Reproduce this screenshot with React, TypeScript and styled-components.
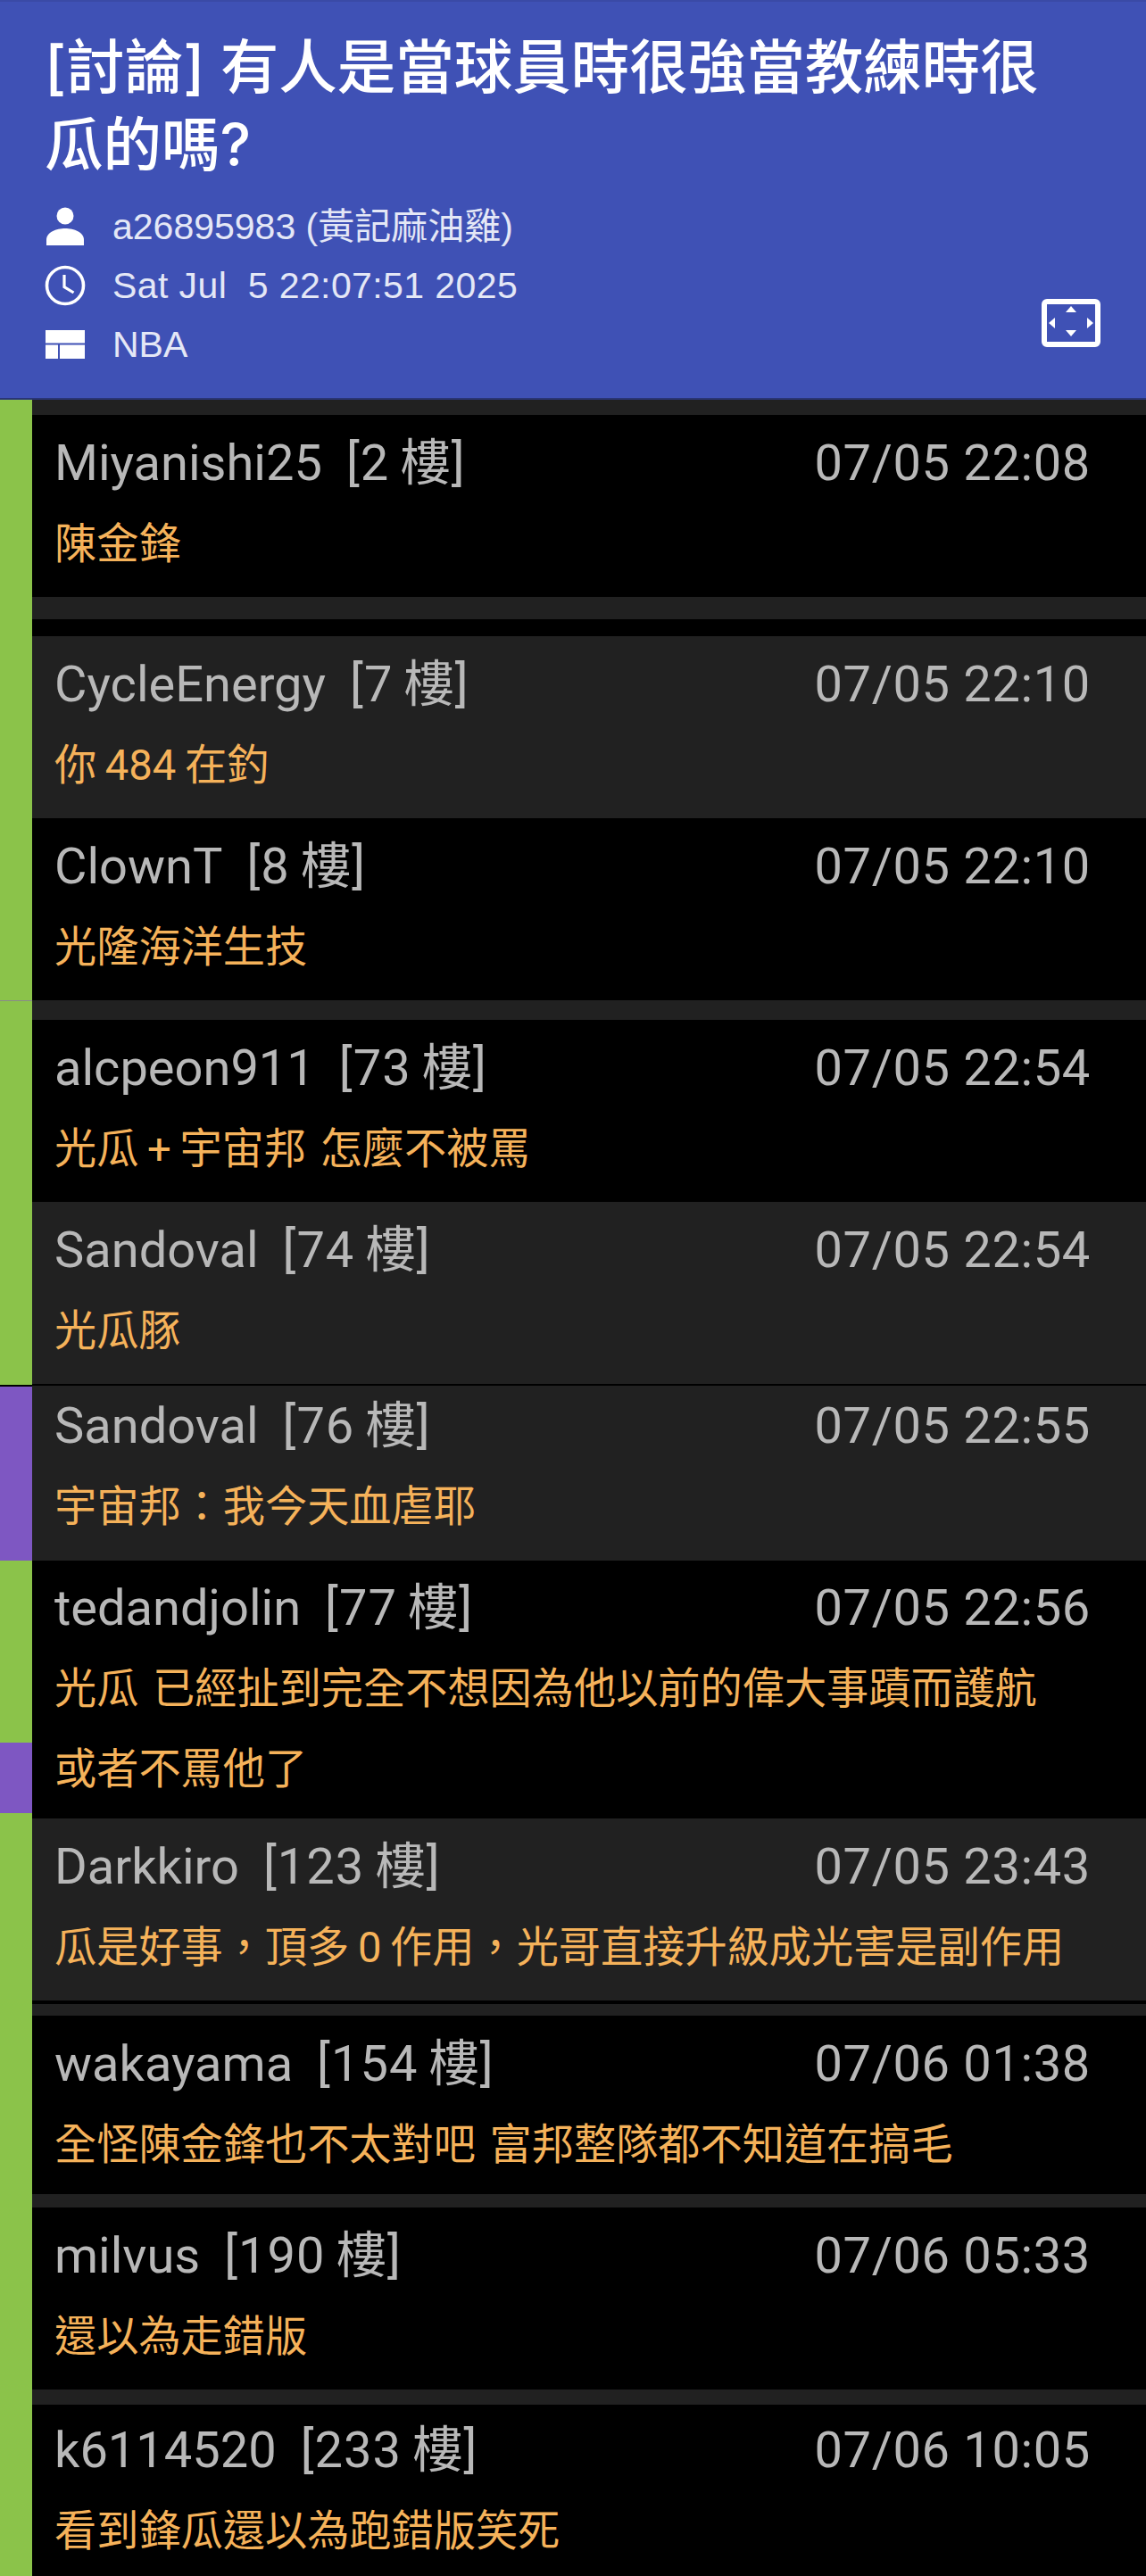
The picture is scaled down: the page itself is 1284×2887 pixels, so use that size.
import styled, { createGlobalStyle } from 'styled-components';

const GREEN = '#8bc34a';
const PURPLE = '#7e57c2';
const GRAY = '#212121';
const BLACK = '#000000';

type Post = {
  id: string;
  author: string;
  floor: string;
  time: string;
  lines: string[];
  tone: string;
  before?: { color: string; height: number }[];
  pt?: number;
  pb?: number;
};

const posts: Post[] = [
  {
    id: '2',
    author: 'Miyanishi25',
    floor: '[2\u2009樓]',
    time: '07/05 22:08',
    lines: ['陳金鋒'],
    tone: BLACK,
    before: [{ color: GRAY, height: 17 }],
  },
  {
    id: '7',
    author: 'CycleEnergy',
    floor: '[7\u2009樓]',
    time: '07/05 22:10',
    lines: ['你\u2009484\u2009在釣'],
    tone: GRAY,
    before: [
      { color: GRAY, height: 25 },
      { color: BLACK, height: 19 },
    ],
  },
  { id: '8', author: 'ClownT', floor: '[8\u2009樓]', time: '07/05 22:10', lines: ['光隆海洋生技'], tone: BLACK },
  {
    id: '73',
    author: 'alcpeon911',
    floor: '[73\u2009樓]',
    time: '07/05 22:54',
    lines: ['光瓜\u2009+\u2009宇宙邦 怎麼不被罵'],
    tone: BLACK,
    before: [{ color: GRAY, height: 22 }],
  },
  { id: '74', author: 'Sandoval', floor: '[74\u2009樓]', time: '07/05 22:54', lines: ['光瓜豚'], tone: GRAY },
  {
    id: '76',
    author: 'Sandoval',
    floor: '[76\u2009樓]',
    time: '07/05 22:55',
    lines: ['宇宙邦：我今天血虐耶'],
    tone: GRAY,
    before: [{ color: BLACK, height: 2 }],
    pt: 13,
    pb: 15,
  },
  {
    id: '77',
    author: 'tedandjolin',
    floor: '[77\u2009樓]',
    time: '07/05 22:56',
    lines: ['光瓜 已經扯到完全不想因為他以前的偉大事蹟而護航', '或者不罵他了'],
    tone: BLACK,
    pt: 21,
    pb: 10,
  },
  {
    id: '123',
    author: 'Darkkiro',
    floor: '[123\u2009樓]',
    time: '07/05 23:43',
    lines: ['瓜是好事，頂多\u20090\u2009作用，光哥直接升級成光害是副作用'],
    tone: GRAY,
  },
  {
    id: '154',
    author: 'wakayama',
    floor: '[154\u2009樓]',
    time: '07/06 01:38',
    lines: ['全怪陳金鋒也不太對吧 富邦整隊都不知道在搞毛'],
    tone: BLACK,
    before: [
      { color: BLACK, height: 4 },
      { color: GRAY, height: 13 },
    ],
    pb: 10,
  },
  {
    id: '190',
    author: 'milvus',
    floor: '[190\u2009樓]',
    time: '07/06 05:33',
    lines: ['還以為走錯版'],
    tone: BLACK,
    before: [{ color: GRAY, height: 15 }],
  },
  {
    id: '233',
    author: 'k6114520',
    floor: '[233\u2009樓]',
    time: '07/06 10:05',
    lines: ['看到鋒瓜還以為跑錯版笑死'],
    tone: BLACK,
    before: [{ color: GRAY, height: 17 }],
    pt: 19,
    pb: 0,
  },
];

const railSegments = [
  { color: GREEN, height: 673 },
  { color: '#8a8a8a', height: 1 },
  { color: GREEN, height: 430 },
  { color: BLACK, height: 2 },
  { color: PURPLE, height: 195 },
  { color: GREEN, height: 204 },
  { color: PURPLE, height: 79 },
  { color: GREEN, height: 855 },
];

const PersonIcon = () => (
  <svg width="44" height="44" viewBox="0 0 44 44" fill="#fff">
    <circle cx="22" cy="10" r="9.5" />
    <path d="M1 43v-6c0-9 11-13 21-13s21 4 21 13v6z" />
  </svg>
);

const ClockIcon = () => (
  <svg width="46" height="46" viewBox="0 0 46 46" fill="none" stroke="#fff">
    <circle cx="23" cy="23" r="20.5" strokeWidth="3.6" />
    <path d="M22 11v13.5l10.5 6.5" strokeWidth="3.2" />
  </svg>
);

const QuiltIcon = () => (
  <svg width="44" height="32" viewBox="0 0 44 32" fill="#fff">
    <path d="M0 0h44v14.5H0zM0 16.5h14V32H0zM16 16.5h28V32H16z" />
  </svg>
);

const FullscreenIcon = () => (
  <svg width="66" height="54" viewBox="0 0 66 54">
    <rect x="3" y="3" width="60" height="48" rx="3" fill="none" stroke="#fff" strokeWidth="6" />
    <path d="M33 8l6 7H27zM33 42l-6-7h12zM8 27l7-6v12zM58 27l-7 6V21z" fill="#fff" />
  </svg>
);

const App = () => {
  return (
    <Page>
      <GlobalStyle />
      <Header>
        <Title>[討論] 有人是當球員時很強當教練時很瓜的嗎?</Title>
        <MetaRow>
          <MetaList>
            <MetaItem>
              <MetaIcon>
                <PersonIcon />
              </MetaIcon>
              a26895983 (黃記麻油雞)
            </MetaItem>
            <MetaItem $spaced>
              <MetaIcon>
                <ClockIcon />
              </MetaIcon>
              Sat Jul  5 22:07:51 2025
            </MetaItem>
            <MetaItem>
              <MetaIcon>
                <QuiltIcon />
              </MetaIcon>
              NBA
            </MetaItem>
          </MetaList>
          <FullscreenButton>
            <FullscreenIcon />
          </FullscreenButton>
        </MetaRow>
      </Header>
      <Main>
        <Rail>
          {railSegments.map((segment, index) => (
            <RailSegment key={index} $color={segment.color} $height={segment.height} />
          ))}
        </Rail>
        <Thread>
          {posts.map((post) => (
            <li key={post.id}>
              {post.before?.map((strip, index) => (
                <Strip key={index} $color={strip.color} $height={strip.height} />
              ))}
              <Row $tone={post.tone} $pt={post.pt ?? 22} $pb={post.pb ?? 14}>
                <RowHead>
                  <Author>
                    {post.author}
                    <Floor>{post.floor}</Floor>
                  </Author>
                  <Time>{post.time}</Time>
                </RowHead>
                <Content>
                  {post.lines.map((line) => (
                    <ContentLine key={line}>{line}</ContentLine>
                  ))}
                </Content>
              </Row>
            </li>
          ))}
        </Thread>
      </Main>
    </Page>
  );
};

export default App;

const GlobalStyle = createGlobalStyle`
  html, body {
    margin: 0;
    padding: 0;
    background: #000;
  }

  ul {
    margin: 0;
    padding: 0;
    list-style: none;
  }
`;

const Page = styled.div`
  width: 1284px;
  height: 2887px;
  overflow: hidden;
  font-family: Roboto, 'Noto Sans CJK TC', sans-serif;
`;

const Header = styled.header`
  box-sizing: border-box;
  height: 448px;
  padding: 30px 51px 0 50px;
  background: #3f51b5;
  border-top: 2px solid #3a4aa6;
  border-bottom: 2px solid #2a3575;
  color: #fff;
`;

const Title = styled.h1`
  max-width: 1130px;
  margin: 0;
  font-family: Inter, 'Noto Sans CJK TC', sans-serif;
  font-size: 65.5px;
  font-weight: 500;
  line-height: 87px;
`;

const MetaRow = styled.div`
  display: flex;
  justify-content: space-between;
  margin-top: 15px;
`;

const MetaList = styled.div`
  display: flex;
  flex-direction: column;
`;

const MetaItem = styled.div<{ $spaced?: boolean }>`
  display: flex;
  align-items: center;
  height: 66px;
  line-height: 66px;
  font-family: 'Liberation Sans', 'Noto Sans CJK TC', sans-serif;
  font-size: 41px;
  letter-spacing: ${(props) => (props.$spaced ? '0.4px' : '0')};
  color: #e4e7f6;
  white-space: pre;
`;

const MetaIcon = styled.span`
  display: flex;
  justify-content: center;
  width: 46px;
  margin-right: 30px;
`;

const FullscreenButton = styled.div`
  display: flex;
  margin-top: 114px;
`;

const Main = styled.main`
  display: flex;
`;

const Rail = styled.div`
  display: flex;
  flex-direction: column;
  flex: 0 0 36px;
`;

const RailSegment = styled.div<{ $color: string; $height: number }>`
  height: ${(props) => props.$height}px;
  background: ${(props) => props.$color};
`;

const Thread = styled.ul`
  flex: 1;
  min-width: 0;
`;

const Strip = styled.div<{ $color: string; $height: number }>`
  height: ${(props) => props.$height}px;
  background: ${(props) => props.$color};
`;

const Row = styled.article<{ $tone: string; $pt: number; $pb: number }>`
  padding: ${(props) => props.$pt}px 62px ${(props) => props.$pb}px 25px;
  background: ${(props) => props.$tone};
`;

const RowHead = styled.div`
  display: flex;
  justify-content: space-between;
  height: 64px;
  line-height: 64px;
  font-size: 56px;
  font-weight: 400;
  color: #b8b8b8;
`;

const Author = styled.span`
  white-space: pre;
`;

const Floor = styled.span`
  margin-left: 27px;
  letter-spacing: 1px;
`;

const Time = styled.span`
  letter-spacing: 0.65px;
  white-space: pre;
`;

const Content = styled.div`
  margin-top: 14px;
`;

const ContentLine = styled.div`
  height: 90px;
  line-height: 90px;
  font-size: 47.2px;
  font-weight: 400;
  word-spacing: 4px;
  color: #f5b25a;
  white-space: pre;
`;
